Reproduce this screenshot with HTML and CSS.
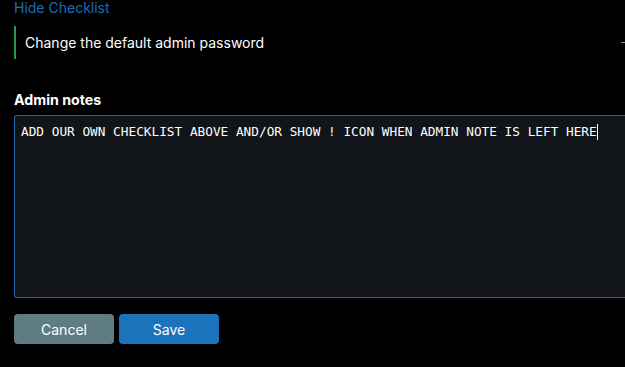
FILE: index.html
```html
<!DOCTYPE html>
<html lang="en">

<head>
  <meta charset="UTF-8" />
  <meta name="viewport" content="width=device-width, initial-scale=1.0" />
  <link rel="stylesheet" href="styles.css">
  <title>Admin checklist</title>
</head>

<body>
  <a class="toggle-link" href="#">Hide Checklist</a>

  <div class="checklist">
    <div class="check-item">
      <span class="check-text">Change the default admin password</span>
      <span class="check-mark"></span>
    </div>
  </div>

  <div class="notes-field">
    <label class="notes-label">Admin notes</label>
    <div class="notes-box">ADD OUR OWN CHECKLIST ABOVE AND/OR SHOW ! ICON WHEN ADMIN NOTE IS LEFT HERE<span class="caret"></span></div>
  </div>

  <div class="actions">
    <button class="btn btn-cancel">Cancel</button>
    <button class="btn btn-save">Save</button>
  </div>
</body>

</html>
```

FILE: styles.css
```css
*,
*::after,
*::before {
  box-sizing: border-box;
}

html,
body {
  overflow: hidden;
}

body {
  margin: 0;
  padding: 0 0 0 14px;
  background-color: #000;
  color: #fff;
  font-family: Inter, "Noto Sans", sans-serif;
}

.toggle-link {
  display: block;
  font-size: 14px;
  line-height: 16px;
  color: #1d6dba;
  text-decoration: none;
}

.checklist {
  margin-top: 10px;
}

.check-item {
  display: flex;
  align-items: center;
  justify-content: space-between;
  height: 33px;
  border-left: 2px solid #1f9a4c;
  padding-left: 9px;
  font-size: 14px;
}

.check-mark {
  width: 4px;
  height: 1px;
  background-color: #8a96a0;
  margin-top: -1px;
}

.notes-field {
  margin-top: 32px;
  display: flex;
  flex-direction: column;
}

.notes-label {
  font-size: 14.2px;
  font-weight: 700;
  line-height: 17px;
}

.notes-box {
  margin-top: 7px;
  height: 183px;
  background-color: #111418;
  border: 1px solid #1b63a6;
  border-right: none;
  border-radius: 3px 0 0 3px;
  padding: 8px 6px;
  font-family: "DejaVu Sans Mono", "Liberation Mono", monospace;
  font-size: 12.75px;
  color: #fff;
  white-space: nowrap;
  overflow: hidden;
}

.caret {
  display: inline-block;
  width: 1px;
  height: 16px;
  background-color: #fff;
  vertical-align: -4px;
}

.actions {
  display: flex;
  gap: 5px;
  margin-top: 16px;
}

.btn {
  width: 100px;
  height: 30px;
  border: none;
  border-radius: 4px;
  color: #fff;
  font-family: Inter, "Noto Sans", sans-serif;
  font-size: 14px;
  cursor: pointer;
}

.btn-cancel {
  background-color: #5f7b83;
}

.btn-save {
  background-color: #1b74bb;
}
```
